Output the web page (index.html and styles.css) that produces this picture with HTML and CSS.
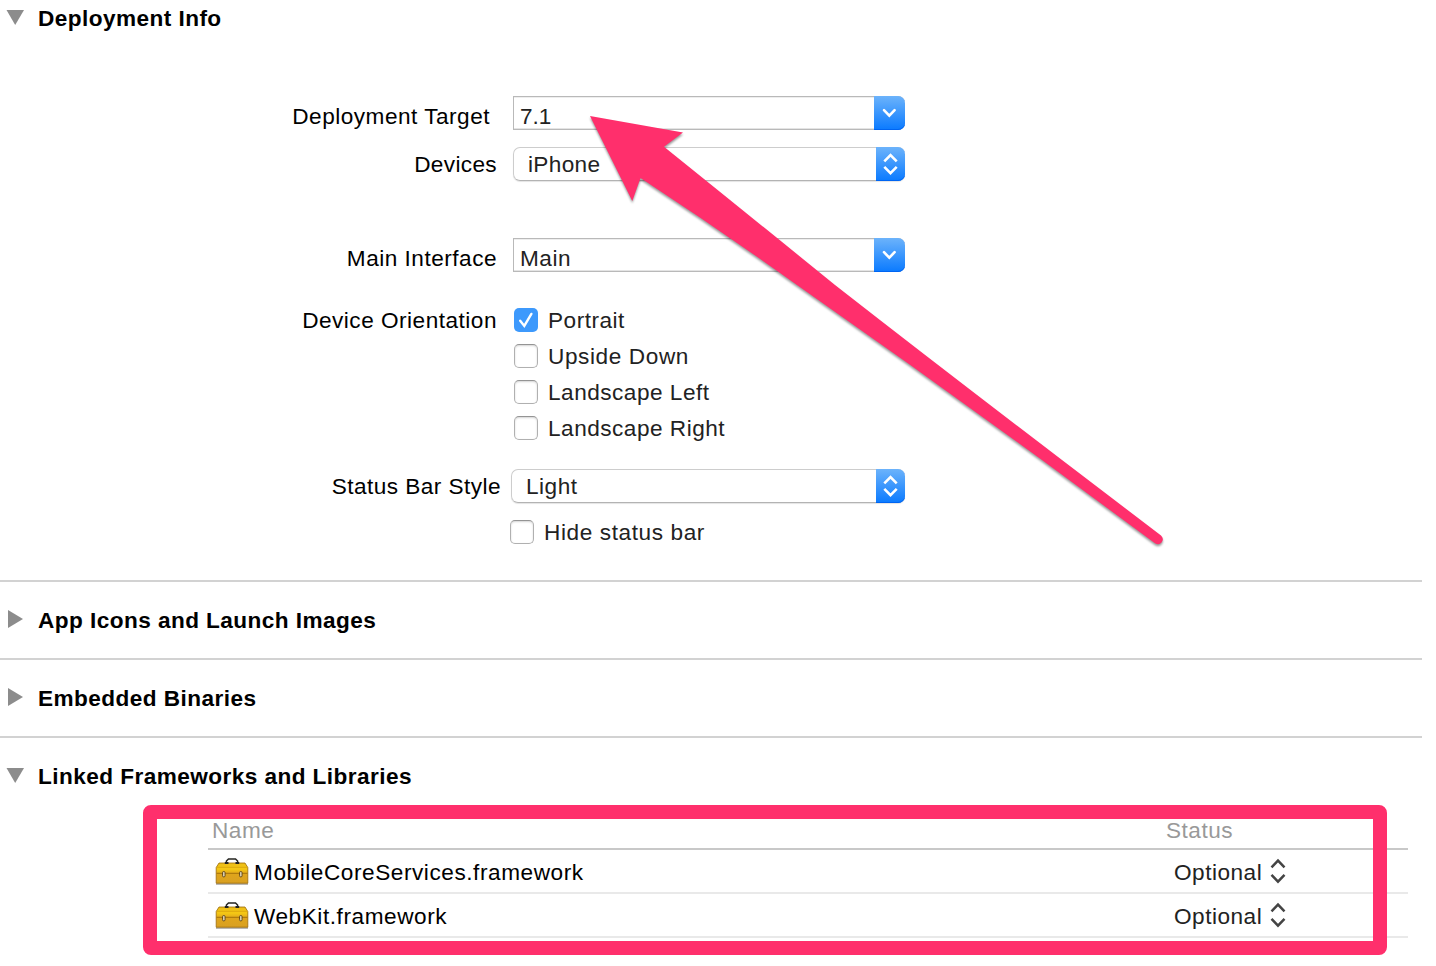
FILE: index.html
```html
<!DOCTYPE html>
<html lang="en">
<head>
<meta charset="utf-8">
<title>Deployment Info</title>
<link rel="stylesheet" href="styles.css">
</head>
<body>
<svg class="defs" width="0" height="0" aria-hidden="true">
  <defs>
    <linearGradient id="gold" x1="0" y1="0" x2="0" y2="1">
      <stop offset="0" stop-color="#edbd18"/><stop offset=".3" stop-color="#f5c814"/><stop offset=".55" stop-color="#dfa51c"/><stop offset="1" stop-color="#d9a022"/>
    </linearGradient>
    <symbol id="toolbox" viewBox="0 0 34 28">
      <path d="M1 27h32" stroke="#9b9894" stroke-width="1.400"/>
      <path d="M1.200 10.500L4 6H30L32.800 10.500V26.200H1.200Z" fill="url(#gold)" stroke="#9b6b0a" stroke-width=".8" stroke-linejoin="round"/>
      <path d="M2 10.300H32" stroke="#dca80e" stroke-width="1"/>
      <path d="M1.500 16.300H32.500" stroke="#a5710b" stroke-width="1"/>
      <path d="M9.800 6H13.500M20.500 6H24.200" stroke="#222" stroke-width="2"/>
      <path d="M11.400 5.500V4L13.500 2H20.500L22.600 4V5.500" fill="none" stroke="#252521" stroke-width="1.500"/>
      <rect x="7.500" y="14.500" width="2.600" height="5.400" rx="1.200" fill="#d9ceb0" stroke="#604514" stroke-width=".9"/>
      <rect x="24.500" y="14.500" width="2.600" height="5.400" rx="1.200" fill="#d9ceb0" stroke="#604514" stroke-width=".9"/>
    </symbol>
    <symbol id="down" viewBox="0 0 31 34"><path d="M10 14.200l5.300 5.500 5.300-5.500" fill="none" stroke="#fff" stroke-width="2.600" stroke-linecap="round"/></symbol>
    <symbol id="updown" viewBox="0 0 29 34"><path d="M8.300 14.300l6.200-6.300 6.200 6.300M8.300 19.800l6.200 6.300 6.200-6.300" fill="none" stroke="#fff" stroke-width="2.600"/></symbol>
    <symbol id="stepper" viewBox="0 0 16 26"><path d="M1.500 9.300L8 2.600l6.500 6.700M1.500 16.900L8 23.600l6.500-6.700" fill="none" stroke="#444" stroke-width="2.500"/></symbol>
  </defs>
</svg>
<main class="page">
  <section class="section deployment">
    <h2 class="heading"><svg class="disclosure" viewBox="0 0 18 18"><path d="M.5 2h17.500L9.200 17z"/></svg><span>Deployment Info</span></h2>
    <div class="form">
      <div class="row"><span class="label low target">Deployment Target</span>
        <div class="combo"><span class="value number">7.1</span><svg class="cap" width="31" height="34"><use href="#down"/></svg></div></div>
      <div class="row devices"><span class="label tight">Devices</span>
        <div class="popup"><span class="value tight">iPhone</span><svg class="cap" width="29" height="34"><use href="#updown"/></svg></div></div>
      <div class="row interface"><span class="label low">Main Interface</span>
        <div class="combo"><span class="value">Main</span><svg class="cap" width="31" height="34"><use href="#down"/></svg></div></div>
      <div class="row orientation"><span class="label">Device Orientation</span>
        <div class="checks">
          <div class="check"><span class="box checked"><svg width="24" height="24" viewBox="0 0 24 24"><path d="M6.200 12.700l4.100 5.200 7.100-12" fill="none" stroke="#fff" stroke-width="2.400" stroke-linecap="round"/></svg></span><span>Portrait</span></div>
          <div class="check"><span class="box"></span><span class="loose">Upside Down</span></div>
          <div class="check"><span class="box"></span><span>Landscape Left</span></div>
          <div class="check"><span class="box"></span><span>Landscape Right</span></div>
        </div></div>
      <div class="row style"><span class="label">Status Bar Style</span>
        <div class="popup wide"><span class="value">Light</span><svg class="cap" width="29" height="34"><use href="#updown"/></svg></div></div>
      <div class="check hide"><span class="box"></span><span class="loose">Hide status bar</span></div>
    </div>
  </section>
  <section class="section closed"><h2 class="heading"><svg class="disclosure" viewBox="0 0 18 18"><path d="M2 0v18l15-9z"/></svg><span>App Icons and Launch Images</span></h2></section>
  <section class="section closed"><h2 class="heading"><svg class="disclosure" viewBox="0 0 18 18"><path d="M2 0v18l15-9z"/></svg><span>Embedded Binaries</span></h2></section>
  <section class="linked">
    <h2 class="heading"><svg class="disclosure" viewBox="0 0 18 18"><path d="M.5 2h17.500L9.200 17z"/></svg><span>Linked Frameworks and Libraries</span></h2>
    <div class="table">
      <div class="thead"><span class="name">Name</span><span>Status</span></div>
      <div class="tr"><svg class="tool" width="34" height="28"><use href="#toolbox"/></svg><span class="name">MobileCoreServices.framework</span><span class="opt">Optional</span><svg width="16" height="26"><use href="#stepper"/></svg></div>
      <div class="tr"><svg class="tool" width="34" height="28"><use href="#toolbox"/></svg><span class="name">WebKit.framework</span><span class="opt">Optional</span><svg width="16" height="26"><use href="#stepper"/></svg></div>
    </div>
  </section>
  <svg class="arrow" width="1436" height="580" viewBox="0 0 1436 580"><path d="M590 116L683 132.500L664 146.700Q755 220 835 285Q940 367 1062 460L1161 535.500Q1164.500 539 1161.500 542.500Q1159 545.500 1155 543.200L1042 460Q920 371 797 285Q720 230 640.500 178L632.300 201Z"/></svg>
  <div class="frame"></div>
</main>
</body>
</html>
```
FILE: styles.css
```css
* { box-sizing: border-box; }
body { margin: 0; background: #fff; color: #000; font: 22.6px/36px "Liberation Sans", Arial, sans-serif; letter-spacing: .5px; }
.defs { position: absolute; }
.page { position: relative; width: 1436px; height: 966px; overflow: hidden; white-space: nowrap; }
.section { width: 1422px; border-bottom: 2px solid #d2d2d2; }
.deployment { height: 582px; }
.closed { height: 78px; padding-top: 21px; }
.heading { display: flex; align-items: center; gap: 14px; height: 34px; margin: 0; padding-left: 6px; font-size: 22.6px; font-weight: 700; letter-spacing: .44px; }
.heading span { padding-top: 2px; }
.disclosure { width: 18px; height: 18px; margin-top: -2px; fill: #8c8c8c; }
.deployment .heading { padding-top: 1px; height: 35px; }
.form { display: flex; flex-direction: column; padding-top: 61px; }
.row { display: flex; height: 34px; }
.label { width: 497px; margin-right: 16px; text-align: right; }
.low { padding-top: 3px; }
.target { padding-right: 7px; }
.devices { margin-top: 17px; }
.interface { margin-top: 57px; }
.orientation { margin-top: 30px; height: 144px; }
.orientation .label { line-height: 38px; }
.style { margin-top: 23px; }
.combo, .popup { display: flex; justify-content: space-between; width: 392px; height: 34px; color: #222; }
.combo { padding-left: 6px; border: 1px solid #b9b9b9; border-right: 0; border-radius: 0 7px 7px 0; box-shadow: inset 0 1px #eee, inset 0 -1px #e4e4e4; }
.combo .value { padding-top: 2px; }
.combo .cap, .popup .cap { margin: -1px 0; }
.popup { padding-left: 14px; border: 1px solid #cdcdcd; border-bottom-color: #b3b3b3; border-right: 0; border-radius: 7px; box-shadow: 0 1px 1px #e4e4e4; }
.popup .value { margin-top: -1px; }
.tight { letter-spacing: .35px; }
.number { letter-spacing: 0; }
.loose { letter-spacing: .6px; }
.cap { flex: none; border-radius: 0 7px 7px 0; background: linear-gradient(#6cb3fb, #0a7aff); box-shadow: inset 0 -1px #0065f2; }
.checks { display: flex; flex-direction: column; }
.check { display: flex; align-items: center; gap: 10px; height: 36px; padding-left: 1px; color: #222; }
.check > span:last-child { padding-top: 2px; }
.box { width: 24px; height: 24px; border: 1px solid #b0b0b0; border-top-color: #949494; border-radius: 5px; box-shadow: inset 0 1px 2px #d4d4d4; }
.checked { border: 0; background: #3d99fc; box-shadow: none; }
.checked svg { display: block; }
.style .label { width: 501px; margin-right: 10px; letter-spacing: .45px; }
.wide { width: 394px; }
.hide { margin-top: 11px; padding-left: 510px; }
.linked { padding-top: 21px; }
.table { width: 1200px; margin-left: 208px; padding-top: 20px; }
.thead { display: flex; height: 37px; padding-left: 4px; border-bottom: 2px solid #c8c8c8; color: #999; }
.thead .name { width: 954px; }
.tr { display: flex; align-items: center; height: 44px; padding-left: 7px; border-bottom: 2px solid #e9e9e9; }
.tr span { padding-top: 4px; }
.tool { margin-right: 5px; }
.tr .name { width: 920px; letter-spacing: .56px; }
.opt { width: 96px; color: #222; }
.arrow { position: absolute; left: 0; top: 0; fill: #ff2f6c; filter: drop-shadow(0 2px 1px rgba(0,0,0,.4)); pointer-events: none; }
.frame { position: absolute; left: 143px; top: 805px; width: 1244px; height: 150px; border: 14px solid #ff2f6c; border-radius: 8px; }
```
